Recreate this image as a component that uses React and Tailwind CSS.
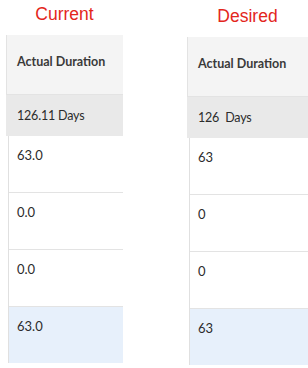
import React from "react";

const font = { fontFamily: 'Lato, "Noto Sans", sans-serif' };

function DurationTable({ title, total, values, offset }) {
  return (
    <div className={offset}>
      <div
        className="h-[35px] pt-[3px] text-center text-[17.5px] leading-[22px] text-[#e3261c]"
        style={{ fontFamily: '"Liberation Sans", Arial, sans-serif' }}
      >
        {title}
      </div>
      <div style={font} className="text-[13px] text-[#2c2c2c]">
        {/* Header */}
        <div className="flex h-[60px] items-center border-b border-l border-[#e3e3e3] bg-[#f4f4f4] pb-[4px] pl-[10px] text-[12.5px] font-bold text-[#3a3a3a]">
          Actual Duration
        </div>
        {/* Total row */}
        <div className="flex h-[41px] items-center bg-[#e9e9e9] pl-[11px] pt-[2px] text-[12.5px] tracking-[-0.2px]">
          {total}
        </div>
        {/* Body rows */}
        <div className="ml-[2px] border-l border-[#e0e0e0]">
          {values.map((v, i) => (
            <div
              key={i}
              className={
                i === values.length - 1
                  ? "h-[56px] bg-[#e7f0fb] pl-[8px] pt-[10px]"
                  : "h-[57px] border-b border-[#e3e3e3] pl-[8px] pt-[10px]"
              }
            >
              {v}
            </div>
          ))}
        </div>
      </div>
    </div>
  );
}

export default function App() {
  return (
    <div className="flex h-[368px] w-[308px] overflow-hidden bg-white">
      <DurationTable
        title="Current"
        total="126.11 Days"
        values={["63.0", "0.0", "0.0", "63.0"]}
        offset="ml-[6px] w-[117px] shrink-0"
      />
      <DurationTable
        title="Desired"
        total={"126\u00a0 Days"}
        values={["63", "0", "0", "63"]}
        offset="ml-[64px] mt-[2px] w-[121px] shrink-0"
      />
    </div>
  );
}
